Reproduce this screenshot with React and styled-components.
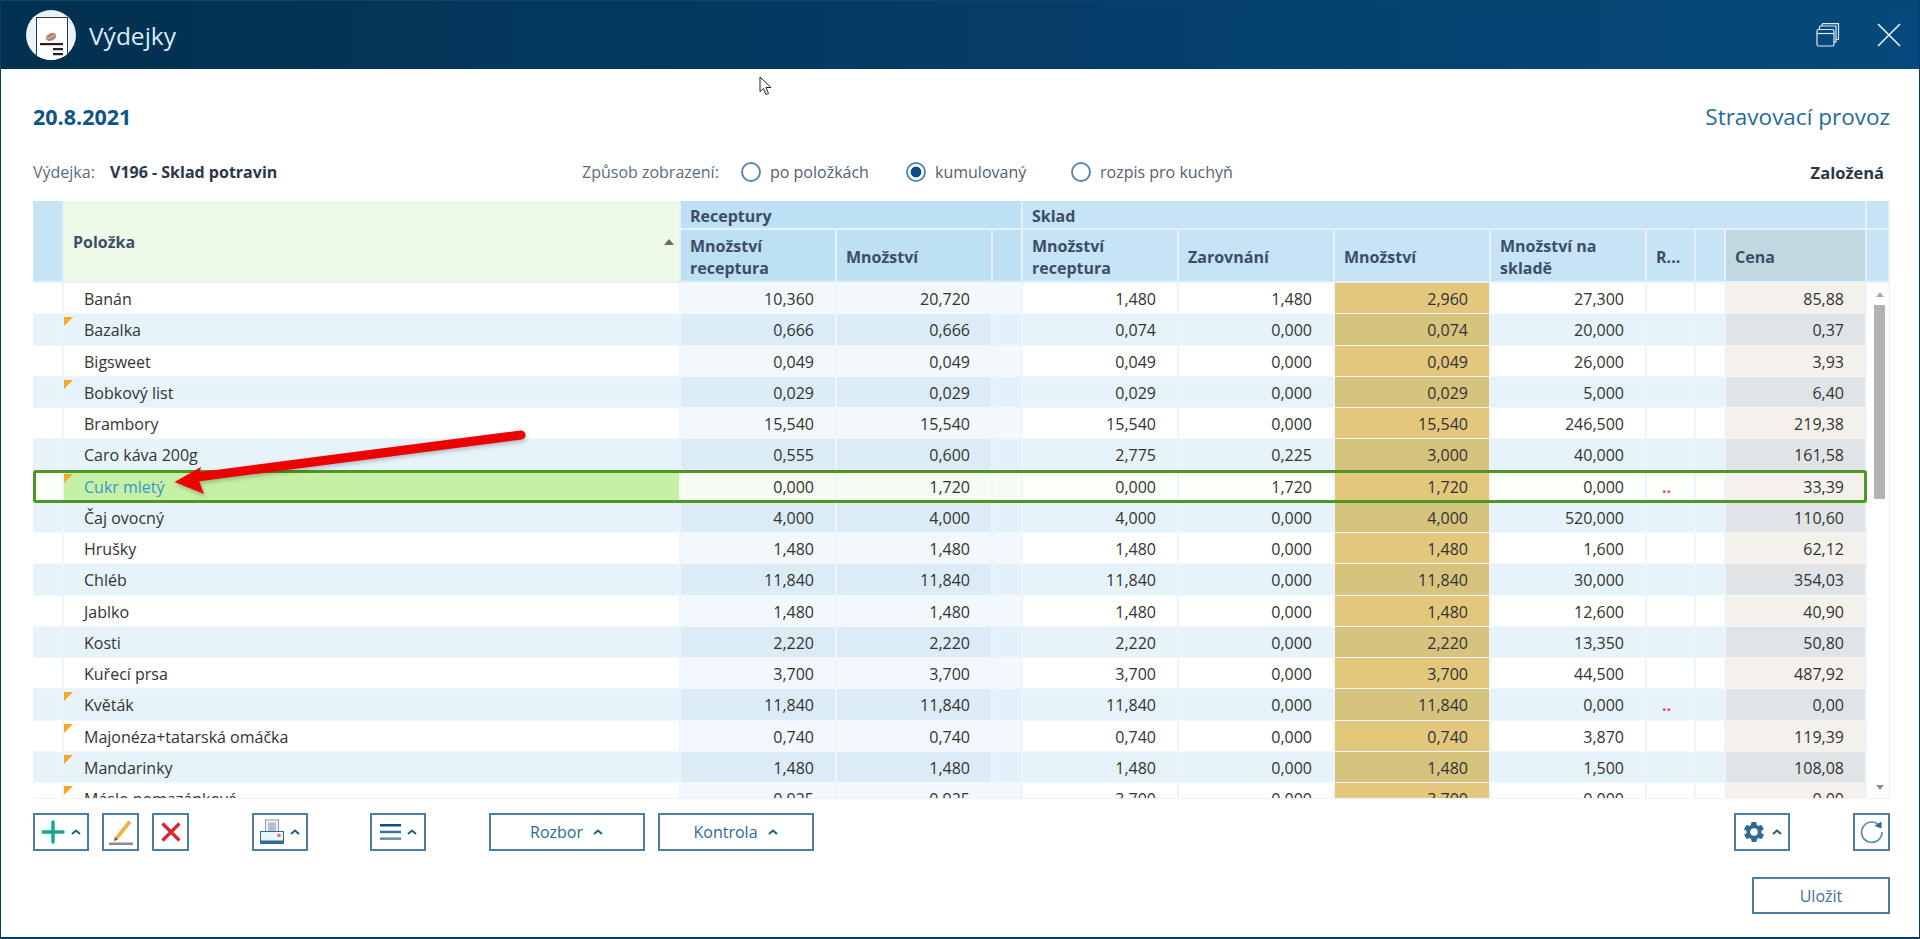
import React from "react"
import styled, { createGlobalStyle } from "styled-components"

const BODY_COLUMNS = "31px 617px 156px 156px 30px 156px 156px 156px 156px 49px 30px 141px"
const HEAD_COLUMNS = `${BODY_COLUMNS} 23px`

const rows = [
  ["Banán", 0, "10,360", "20,720", "1,480", "1,480", "2,960", "27,300", "", "85,88"],
  ["Bazalka", 1, "0,666", "0,666", "0,074", "0,000", "0,074", "20,000", "", "0,37"],
  ["Bigsweet", 0, "0,049", "0,049", "0,049", "0,000", "0,049", "26,000", "", "3,93"],
  ["Bobkový list", 1, "0,029", "0,029", "0,029", "0,000", "0,029", "5,000", "", "6,40"],
  ["Brambory", 0, "15,540", "15,540", "15,540", "0,000", "15,540", "246,500", "", "219,38"],
  ["Caro káva 200g", 0, "0,555", "0,600", "2,775", "0,225", "3,000", "40,000", "", "161,58"],
  ["Cukr mletý", 1, "0,000", "1,720", "0,000", "1,720", "1,720", "0,000", "..", "33,39"],
  ["Čaj ovocný", 0, "4,000", "4,000", "4,000", "0,000", "4,000", "520,000", "", "110,60"],
  ["Hrušky", 0, "1,480", "1,480", "1,480", "0,000", "1,480", "1,600", "", "62,12"],
  ["Chléb", 0, "11,840", "11,840", "11,840", "0,000", "11,840", "30,000", "", "354,03"],
  ["Jablko", 0, "1,480", "1,480", "1,480", "0,000", "1,480", "12,600", "", "40,90"],
  ["Kosti", 0, "2,220", "2,220", "2,220", "0,000", "2,220", "13,350", "", "50,80"],
  ["Kuřecí prsa", 0, "3,700", "3,700", "3,700", "0,000", "3,700", "44,500", "", "487,92"],
  ["Květák", 1, "11,840", "11,840", "11,840", "0,000", "11,840", "0,000", "..", "0,00"],
  ["Majonéza+tatarská omáčka", 1, "0,740", "0,740", "0,740", "0,000", "0,740", "3,870", "", "119,39"],
  ["Mandarinky", 1, "1,480", "1,480", "1,480", "0,000", "1,480", "1,500", "", "108,08"],
  ["Máslo pomazánkové", 1, "0,925", "0,925", "3,700", "0,000", "3,700", "0,000", "", "0,00"],
]

const SELECTED = 6

// [odd row, even row, selected row]
const colors = {
  plain: ["#ffffff", "#e6f3fb", "#fdfffb"],
  recipe: ["#f3f8fc", "#dcecf7", "#f6fbf3"],
  spacer: ["#f3f8fc", "#e3f1fa", "#f6fbf3"],
  amount: ["#e2c77d", "#d6c37e", "#e2c77d"],
  price: ["#f4f0eb", "#e0e4e7", "#f4f0eb"],
}

const Logo = () => (
  <LogoCircle>
    <svg width="50" height="50" viewBox="0 0 50 50">
      <rect x="10.5" y="7.5" width="31" height="44" fill="#fff" stroke="#333" strokeWidth="1" />
      <ellipse cx="25" cy="27" rx="5.5" ry="3.6" fill="#b4806f" transform="rotate(-25 25 27)" />
      <path d="M21 28.5c3-.5 5-2 8-3.5" stroke="#f0e0d8" strokeWidth="0.8" fill="none" />
      <rect x="14" y="33" width="23" height="2.2" fill="#222" />
      <rect x="27" y="38" width="10" height="2.2" fill="#222" />
      <rect x="27" y="43" width="10" height="2.2" fill="#222" />
    </svg>
  </LogoCircle>
)

const RestoreIcon = () => (
  <svg width="24" height="24" viewBox="0 0 24 24" fill="none" stroke="#dcebf6" strokeWidth="1.2">
    <rect x="1" y="6.5" width="17" height="16.5" rx="1.5" />
    <path d="M1 10.5h17" />
    <path d="M3.5 6.5V4.2C3.5 3.5 4 3 4.7 3H20v16h-2" />
    <path d="M6 3V1.6C6 1 6.5 .6 7 .6h15.5v15.9H20" />
  </svg>
)

const CloseIcon = () => (
  <svg width="24" height="24" viewBox="0 0 24 24" fill="none" stroke="#e6f1f9" strokeWidth="1.6">
    <path d="M1 1l22 22M23 1L1 23" />
  </svg>
)

const Caret = () => (
  <svg width="10" height="6" viewBox="0 0 10 6" fill="none" stroke="#1f5f8b" strokeWidth="2">
    <path d="M1 5l4-3.5L9 5" />
  </svg>
)

const PlusIcon = () => (
  <svg width="24" height="24" viewBox="0 0 24 24" fill="none" stroke="#17a88f" strokeWidth="3.4" strokeLinecap="round">
    <path d="M12 2v20M2 12h20" />
  </svg>
)

const EditIcon = () => (
  <svg width="26" height="26" viewBox="0 0 26 26">
    <path d="M7 18L19 3l3 2.5L10 20.5l-4 1.5z" fill="#f2b544" />
    <path d="M19 3l1.2-1.4 3 2.5L22 5.5z" fill="#ef8f88" />
    <path d="M7 18l3 2.5-4 1.5z" fill="#6b5d50" />
    <rect x="1" y="23.5" width="24" height="2.5" fill="#8e8a99" />
  </svg>
)

const DeleteIcon = () => (
  <svg width="20" height="20" viewBox="0 0 20 20" fill="none" stroke="#d7282f" strokeWidth="3.2">
    <path d="M1.5 1.5l17 17M18.5 1.5l-17 17" />
  </svg>
)

const PrintIcon = () => (
  <svg width="24" height="26" viewBox="0 0 24 26">
    <rect x="5.5" y="1" width="13" height="14" fill="#f2f4f7" stroke="#8d99a8" />
    <rect x="8" y="3.5" width="8" height="9" fill="#b8bec7" />
    <rect x=".5" y="12.5" width="23" height="12" fill="#eaf4fb" stroke="#2f6a94" />
    <rect x="1" y="21.5" width="22" height="3" fill="#2f6a94" />
    <circle cx="19" cy="16.5" r="1.8" fill="#f0626b" />
  </svg>
)

const MenuIcon = () => (
  <svg width="21" height="16" viewBox="0 0 21 16">
    <rect y="0" width="21" height="2.5" fill="#12507f" />
    <rect y="6.7" width="21" height="2.5" fill="#3a779f" />
    <rect y="13.4" width="21" height="2.5" fill="#5a8fb2" />
  </svg>
)

const GearIcon = () => (
  <svg width="24" height="24" viewBox="0 0 24 24" fill="#2f6a94">
    <path d="M19.4 13c.1-.3.1-.7.1-1s0-.7-.1-1l2.1-1.6c.2-.2.2-.4.1-.6l-2-3.5c-.1-.2-.4-.3-.6-.2l-2.5 1c-.5-.4-1.1-.7-1.7-1l-.4-2.6c0-.3-.2-.5-.5-.5h-4c-.3 0-.5.2-.5.5l-.4 2.6c-.6.3-1.2.6-1.7 1l-2.5-1c-.2-.1-.5 0-.6.2l-2 3.5c-.1.2-.1.5.1.6L4.6 11c-.1.3-.1.7-.1 1s0 .7.1 1l-2.1 1.6c-.2.2-.2.4-.1.6l2 3.5c.1.2.4.3.6.2l2.5-1c.5.4 1.1.7 1.7 1l.4 2.6c0 .3.2.5.5.5h4c.3 0 .5-.2.5-.5l.4-2.6c.6-.3 1.2-.6 1.7-1l2.5 1c.2.1.5 0 .6-.2l2-3.5c.1-.2.1-.5-.1-.6zM12 15.800a3.800 3.800 0 1 1 0-7.600 3.800 3.800 0 0 1 0 7.600z" />
  </svg>
)

const RefreshIcon = () => (
  <svg width="24" height="24" viewBox="0 0 24 24" fill="none">
    <path d="M19.5 5.5A10.2 10.2 0 1 0 22 12" stroke="#5a8fb2" strokeWidth="1.7" />
    <path d="M14.5 5.8L21.5 1.5v7z" fill="#2f6a94" />
  </svg>
)

const Row = ({ row, index }) => {
  const [name, flag, recipeA, recipeB, storeA, storeB, amount, stock, warn, price] = row
  const selected = index === SELECTED
  const tone = selected ? 2 : index % 2
  return (
    <BodyRow $selected={selected}>
      <NumCell $bg={colors.plain[tone]} />
      <NameCell $selected={selected} $even={index % 2 === 1} $flag={!!flag}>
        {name}
      </NameCell>
      <NumCell $bg={colors.recipe[tone]}>{recipeA}</NumCell>
      <NumCell $bg={colors.recipe[tone]}>{recipeB}</NumCell>
      <NumCell $bg={colors.spacer[tone]} />
      <NumCell $bg={colors.plain[tone]}>{storeA}</NumCell>
      <NumCell $bg={colors.plain[tone]}>{storeB}</NumCell>
      <NumCell $bg={colors.amount[tone]}>{amount}</NumCell>
      <NumCell $bg={colors.plain[tone]}>{stock}</NumCell>
      <WarnCell $bg={colors.plain[tone]}>{warn}</WarnCell>
      <NumCell $bg={colors.plain[tone]} />
      <NumCell $bg={colors.price[tone]}>{price}</NumCell>
    </BodyRow>
  )
}

const App = () => (
  <Window>
    <GlobalStyle />
    <TitleBar>
      <TitleGroup>
        <Logo />
        <Title>Výdejky</Title>
      </TitleGroup>
      <WindowButtons>
        <RestoreIcon />
        <CloseIcon />
      </WindowButtons>
    </TitleBar>

    <Main>
      <TopLine>
        <DateText>20.8.2021</DateText>
        <Operation>Stravovací provoz</Operation>
      </TopLine>

      <InfoLine>
        <Muted>Výdejka:</Muted>
        <DocName>V196 - Sklad potravin</DocName>
        <ViewLabel>Způsob zobrazení:</ViewLabel>
        <RadioItem $width="165px">
          <Radio />
          <RadioText>po položkách</RadioText>
        </RadioItem>
        <RadioItem $width="165px">
          <Radio $checked />
          <RadioText>kumulovaný</RadioText>
        </RadioItem>
        <RadioItem>
          <Radio />
          <RadioText>rozpis pro kuchyň</RadioText>
        </RadioItem>
        <Status>Založená</Status>
      </InfoLine>

      <Grid>
        <HeaderGrid>
          <HeadCell $area="1 / 1 / 3 / 2" />
          <NameHead>
            Položka
            <SortArrow />
          </NameHead>
          <HeadCell $area="1 / 3 / 2 / 6" $bg="#bde0f4">Receptury</HeadCell>
          <HeadCell $area="1 / 6 / 2 / 13">Sklad</HeadCell>
          <HeadCell $area="1 / 13 / 2 / 14" />
          <HeadCell $area="2 / 3 / 3 / 4" $bg="#bde0f4">Množství receptura</HeadCell>
          <HeadCell $area="2 / 4 / 3 / 5" $bg="#bde0f4">Množství</HeadCell>
          <HeadCell $area="2 / 5 / 3 / 6" $bg="#bde0f4" />
          <HeadCell $area="2 / 6 / 3 / 7">Množství receptura</HeadCell>
          <HeadCell $area="2 / 7 / 3 / 8">Zarovnání</HeadCell>
          <HeadCell $area="2 / 8 / 3 / 9">Množství</HeadCell>
          <HeadCell $area="2 / 9 / 3 / 10">Množství na skladě</HeadCell>
          <HeadCell $area="2 / 10 / 3 / 11">R...</HeadCell>
          <HeadCell $area="2 / 11 / 3 / 12" />
          <HeadCell $area="2 / 12 / 3 / 13" $bg="#c2d8e1">Cena</HeadCell>
          <HeadCell $area="2 / 13 / 3 / 14" />
        </HeaderGrid>
        <GridBody>
          <Rows>
            {rows.map((row, i) => (
              <Row key={row[0]} row={row} index={i} />
            ))}
          </Rows>
          <ScrollTrack>
            <ScrollArrow />
            <ScrollThumb />
            <ScrollArrow $down />
          </ScrollTrack>
        </GridBody>
      </Grid>

      <Toolbar>
        <ToolGroup>
          <ToolButton $width="56px"><PlusIcon /><Caret /></ToolButton>
          <ToolButton><EditIcon /></ToolButton>
          <ToolButton><DeleteIcon /></ToolButton>
        </ToolGroup>
        <ToolGroup>
          <ToolButton $width="56px"><PrintIcon /><Caret /></ToolButton>
        </ToolGroup>
        <ToolGroup>
          <ToolButton $width="56px"><MenuIcon /><Caret /></ToolButton>
        </ToolGroup>
        <ToolGroup>
          <TextButton>Rozbor <Caret /></TextButton>
          <TextButton>Kontrola <Caret /></TextButton>
        </ToolGroup>
        <RightTools>
          <ToolButton $width="56px"><GearIcon /><Caret /></ToolButton>
          <ToolButton><RefreshIcon /></ToolButton>
        </RightTools>
      </Toolbar>

      <Footer>
        <SaveButton>Uložit</SaveButton>
      </Footer>
    </Main>

    <ArrowOverlay width="380" height="76" viewBox="0 0 380 76">
      <path d="M348 9L24 51" stroke="#ee0000" strokeWidth="9" strokeLinecap="round" />
      <path d="M1.5 56L28 41 25 52 31 68z" fill="#ee0000" />
    </ArrowOverlay>
    <Cursor width="13" height="20" viewBox="0 0 13 20">
      <path d="M1 1v14.500l3.500-3 2.500 6 2.500-1-2.500-6H12z" fill="#fff" stroke="#222" strokeWidth="1" />
    </Cursor>
  </Window>
)

export default App

const GlobalStyle = createGlobalStyle`
  html, body {
    margin: 0;
    padding: 0;
    background: #fff;
    overflow: hidden;
  }
  * {
    box-sizing: border-box;
  }
`

const Window = styled.div`
  position: relative;
  width: 1920px;
  height: 939px;
  display: flex;
  flex-direction: column;
  background: #fff;
  border-left: 1px solid #0c3d60;
  border-right: 1px solid #0c3d60;
  border-bottom: 2px solid #0c3d60;
  font-family: "Open Sans", "Noto Sans", sans-serif;
  font-size: 16px;
  overflow: hidden;
`

const TitleBar = styled.div`
  flex: 0 0 69px;
  margin: 0 -1px;
  display: flex;
  align-items: center;
  justify-content: space-between;
  padding: 0 19px 0 26px;
  background: linear-gradient(90deg, #02304f 0%, #043b63 45%, #054a7c 100%);
  border-top: 1px solid #0e4468;
`

const TitleGroup = styled.div`
  display: flex;
  align-items: center;
  gap: 13px;
`

const LogoCircle = styled.div`
  width: 50px;
  height: 50px;
  border-radius: 50%;
  background: #e8f3fb;
  overflow: hidden;
`

const Title = styled.div`
  font-size: 24.5px;
  color: #d9edfb;
  margin-top: 1px;
`

const WindowButtons = styled.div`
  display: flex;
  align-items: center;
  gap: 37px;
`

const Main = styled.div`
  flex: 1;
  display: flex;
  flex-direction: column;
  padding: 0 29px 0 32px;
`

const TopLine = styled.div`
  height: 62px;
  padding-top: 32px;
  display: flex;
  justify-content: space-between;
  align-items: center;
`

const DateText = styled.div`
  font-size: 21.5px;
  font-weight: 700;
  color: #0d5486;
`

const Operation = styled.div`
  font-size: 22.5px;
  color: #2a6a95;
`

const InfoLine = styled.div`
  height: 70px;
  padding-top: 12px;
  display: flex;
  align-items: center;
  color: #5b6b80;
`

const Muted = styled.span`
  width: 77px;
`

const DocName = styled.span`
  width: 472px;
  font-weight: 700;
  color: #2b3648;
`

const ViewLabel = styled.span`
  width: 159px;
`

const RadioItem = styled.div`
  display: flex;
  align-items: center;
  gap: 9px;
  width: ${(p) => p.$width || "auto"};
`

const Radio = styled.span`
  width: 20px;
  height: 20px;
  border-radius: 50%;
  border: 2px solid #5d87ad;
  background: ${(p) => (p.$checked ? "radial-gradient(circle, #0c4f86 0 5px, #fff 5.8px)" : "#fff")};
`

const RadioText = styled.span`
  color: #546175;
`

const Status = styled.span`
  margin-left: auto;
  margin-right: 6px;
  font-size: 16.5px;
  font-weight: 700;
  color: #2b3648;
`

const Grid = styled.div`
  height: 598px;
  display: flex;
  flex-direction: column;
  border-bottom: 1px solid #eef3fb;
  overflow: hidden;
`

const HeaderGrid = styled.div`
  flex: 0 0 82px;
  display: grid;
  grid-template-columns: ${HEAD_COLUMNS};
  grid-template-rows: 29px 53px;
  background: #eef3fb;
`

const HeadCell = styled.div`
  grid-area: ${(p) => p.$area};
  display: flex;
  align-items: center;
  padding: 2px 9px 0;
  background: ${(p) => p.$bg || "#c6e4f6"};
  border-right: 2px solid #e6f0fa;
  border-bottom: 2px solid #e6f0fa;
  color: #3d4d68;
  font-weight: 700;
  line-height: 22px;
`

const NameHead = styled(HeadCell)`
  grid-area: 1 / 2 / 3 / 3;
  position: relative;
  background: #eefae8;
`

const SortArrow = styled.span`
  position: absolute;
  right: 5px;
  top: 38px;
  border-left: 5px solid transparent;
  border-right: 5px solid transparent;
  border-bottom: 6px solid #6a6a60;
`

const GridBody = styled.div`
  flex: 1;
  display: flex;
  min-height: 0;
  overflow: hidden;
`

const Rows = styled.div`
  width: 1834px;
  flex: none;
`

const BodyRow = styled.div`
  position: relative;
  height: 31.25px;
  display: grid;
  grid-template-columns: ${BODY_COLUMNS};
  ${(p) =>
    p.$selected &&
    `
    z-index: 1;
    &::after {
      content: "";
      position: absolute;
      inset: -1px 0;
      border: 3px solid #4f9626;
      border-radius: 3px;
      pointer-events: none;
    }
  `}
`

const NumCell = styled.div`
  display: flex;
  align-items: center;
  justify-content: flex-end;
  padding: 2px 21px 0 0;
  background: ${(p) => p.$bg};
  border-right: 2px solid #eef4fb;
  border-bottom: 1px solid #f3f7fb;
  color: #333;
  white-space: nowrap;
`

const WarnCell = styled(NumCell)`
  justify-content: center;
  padding: 2px 8px 0 0;
  color: #e8505b;
  font-weight: 700;
`

const NameCell = styled.div`
  position: relative;
  display: flex;
  align-items: center;
  padding: 2px 0 0 20px;
  white-space: nowrap;
  color: ${(p) => (p.$selected ? "#3a96c8" : "#333")};
  background: ${(p) => (p.$selected ? "#c6f0a6" : p.$even ? "#e6f3fb" : "#fff")};
  border-right: 2px solid #eef4fb;
  border-bottom: 1px solid #f3f7fb;
  ${(p) =>
    p.$flag &&
    `
    &::before {
      content: "";
      position: absolute;
      left: 0;
      top: 3px;
      border-top: 9px solid #f9a825;
      border-right: 9px solid transparent;
    }
  `}
`

const ScrollTrack = styled.div`
  flex: 1;
  display: flex;
  flex-direction: column;
  align-items: center;
  padding: 9px 0 8px 3px;
  background: #fff;
  border-right: 1px solid #e6f0fa;
`

const ScrollArrow = styled.span`
  flex: none;
  margin-top: ${(p) => (p.$down ? "auto" : "0")};
  border-left: 4px solid transparent;
  border-right: 4px solid transparent;
  ${(p) => (p.$down ? "border-top: 5px solid #8a8f95;" : "border-bottom: 5px solid #a5a9ad;")}
`

const ScrollThumb = styled.div`
  flex: none;
  width: 11px;
  height: 194px;
  margin-top: 8px;
  background: #b3b3b3;
`

const Toolbar = styled.div`
  display: flex;
  align-items: center;
  gap: 62.5px;
  margin-top: 14px;
`

const ToolGroup = styled.div`
  display: flex;
  gap: 13px;
`

const RightTools = styled.div`
  margin-left: auto;
  display: flex;
  gap: 63px;
`

const ToolButton = styled.button`
  width: ${(p) => p.$width || "37px"};
  height: 38px;
  display: flex;
  align-items: center;
  justify-content: center;
  gap: 6px;
  padding: 0;
  background: #fff;
  border: 2px solid #4a7ea3;
`

const TextButton = styled.button`
  width: 156px;
  height: 38px;
  display: flex;
  align-items: center;
  justify-content: center;
  gap: 10px;
  padding: 0;
  background: #fff;
  border: 2px solid #4a7ea3;
  font-family: inherit;
  font-size: 16px;
  color: #2f6a94;
`

const Footer = styled.div`
  display: flex;
  justify-content: flex-end;
  margin-top: 26px;
`

const SaveButton = styled.button`
  width: 138px;
  height: 37px;
  padding: 0;
  background: #fff;
  border: 2px solid #4a7ea3;
  font-family: inherit;
  font-size: 16px;
  color: #3d7299;
`

const ArrowOverlay = styled.svg`
  position: absolute;
  left: 172px;
  top: 426px;
  z-index: 5;
  pointer-events: none;
  filter: drop-shadow(1px 2px 2px rgba(0, 0, 0, 0.25));
`

const Cursor = styled.svg`
  position: absolute;
  left: 758px;
  top: 76px;
  z-index: 5;
`
